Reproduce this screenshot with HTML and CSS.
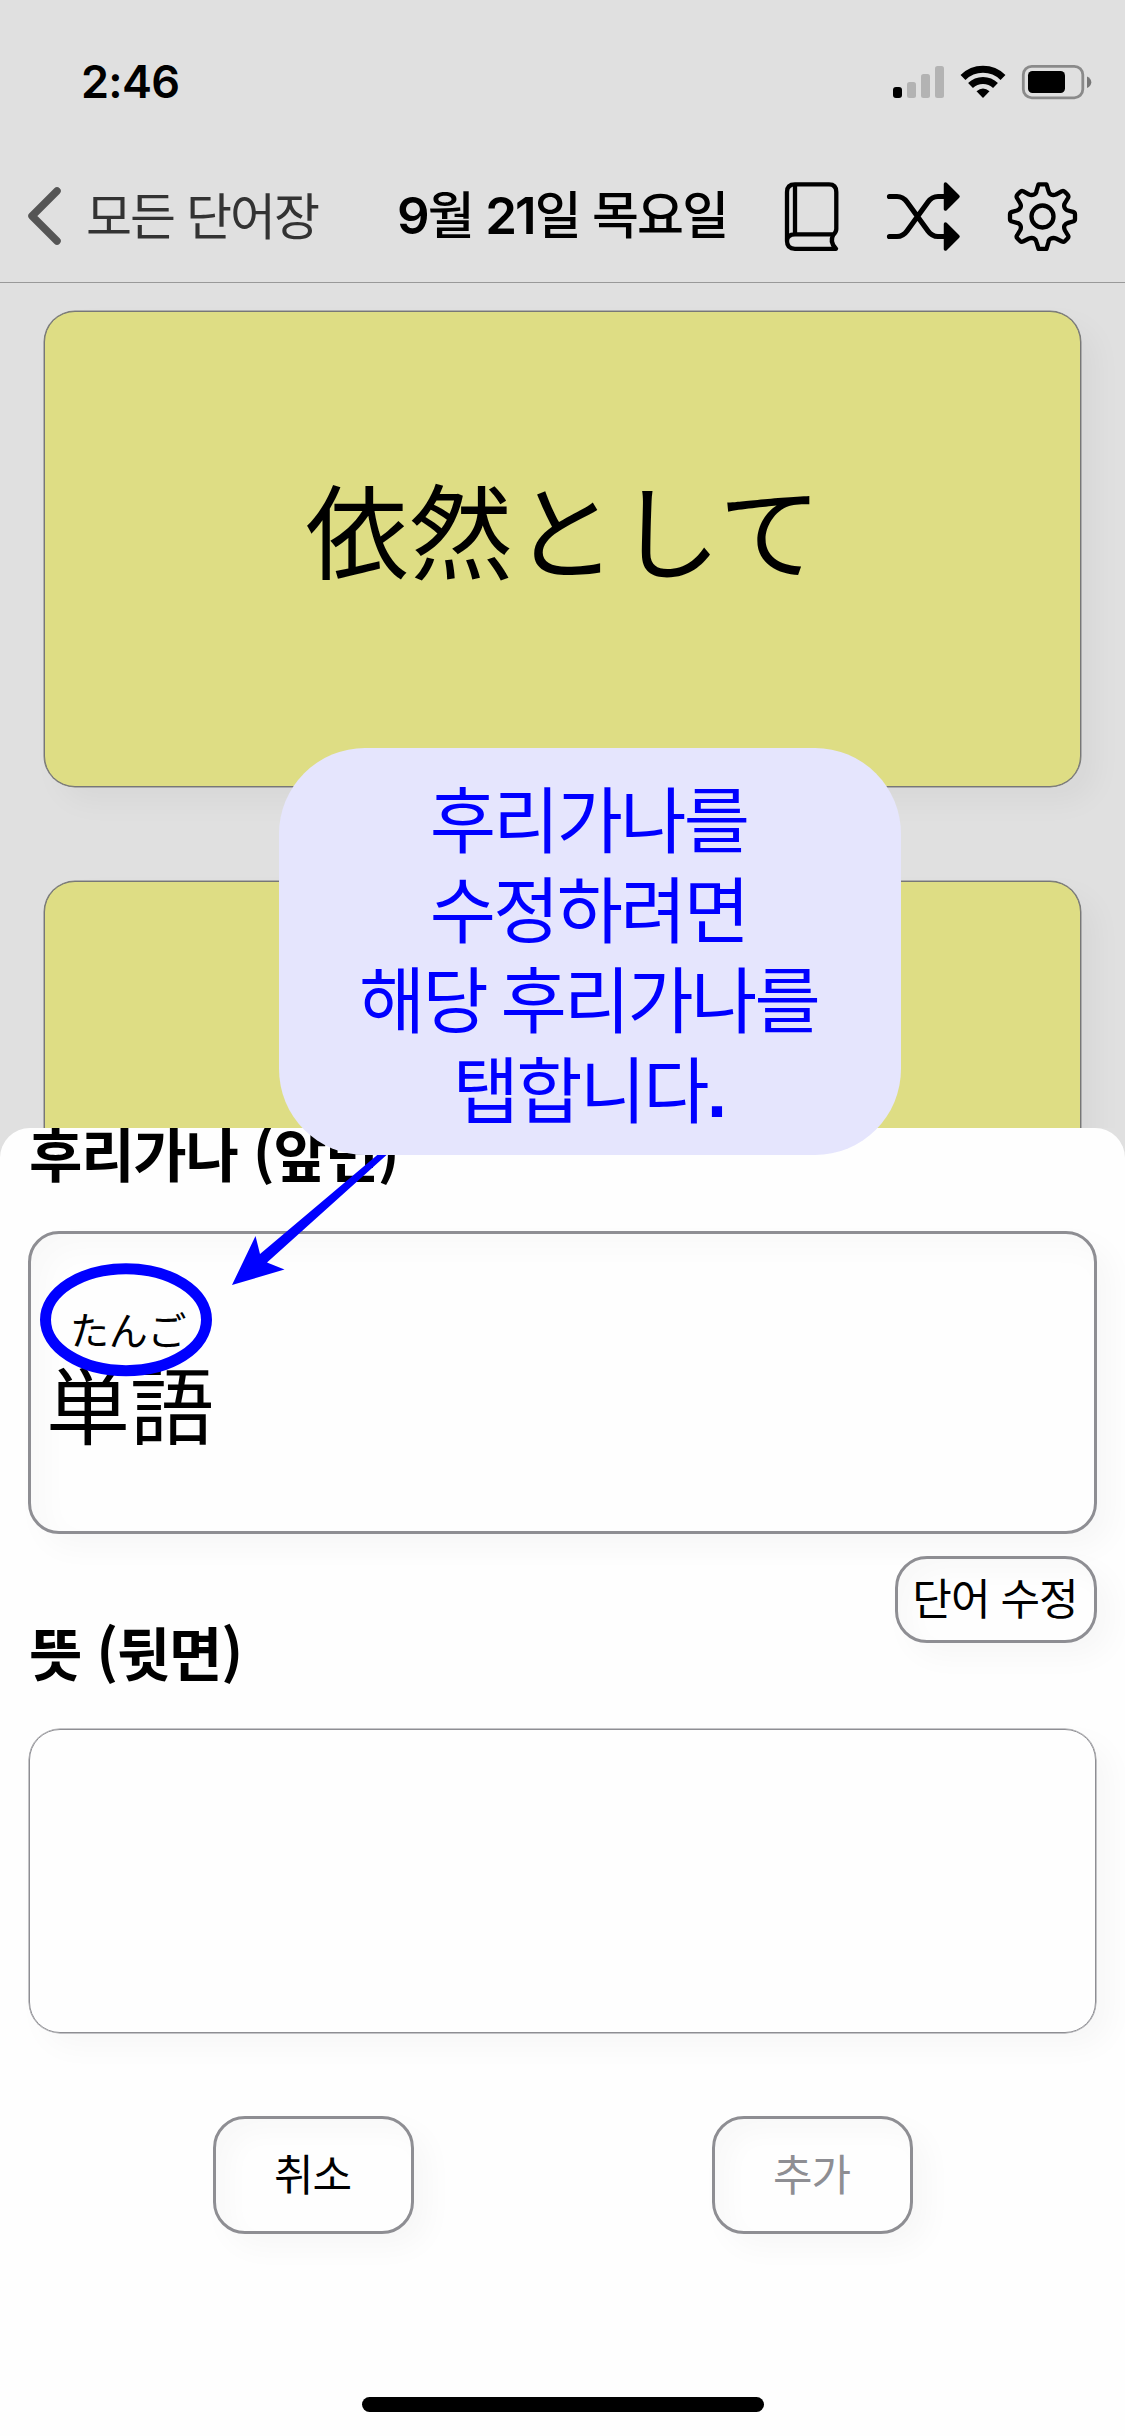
FILE: index.html
```html
<!DOCTYPE html>
<html lang="ko">
<head>
<meta charset="utf-8">
<title>단어장</title>
<link rel="stylesheet" href="styles.css">
</head>
<body>
<div class="screen">
  <div class="status">
    <span class="time">2:46</span>
    <svg class="status-icons" width="200" height="36" viewBox="892 64 200 36">
      <rect x="893" y="87" width="9" height="11" rx="3"/>
      <g fill="#b3b3b3"><rect x="907" y="82" width="9" height="16" rx="2.5"/><rect x="921" y="74" width="9" height="24" rx="2.5"/><rect x="935" y="66" width="9" height="32" rx="2.5"/></g>
      <g fill="none" stroke="#000" stroke-width="7"><path d="M963 77.500A28.500 28.500 0 0 1 1003 77.500"/><path d="M970.500 85.500A18 18 0 0 1 995.500 85.500"/></g>
      <path d="M983 98L976.500 91.200Q983 86 989.500 91.200Z"/>
      <rect x="1023.300" y="66.300" width="59.500" height="31.500" rx="8.500" fill="none" stroke="#8a8a8a" stroke-width="2.800"/>
      <rect x="1028" y="71" width="37" height="22" rx="4.500"/>
      <path d="M1087 76.500Q1091.300 78.500 1091.300 82.300T1087 88Z" fill="#777"/>
    </svg>
  </div>
  <div class="nav">
    <div class="back">
      <svg width="36" height="60" viewBox="0 0 36 60"><path d="M31 5L6 30L31 55" fill="none" stroke="#555" stroke-width="7.500" stroke-linecap="round" stroke-linejoin="round"/></svg>
      <span class="back-text">모든 단어장</span>
    </div>
    <div class="title"><b>9</b>월 <b>21</b>일 목요일</div>
    <svg class="nav-icons" width="300" height="72" viewBox="780 180 300 72" fill="none" stroke="#000" stroke-width="4.300" stroke-linecap="round" stroke-linejoin="round">
      <path d="M836 248.800H795Q787 248.800 787 241V192Q787 184.300 795 184.300H829Q836.300 184.300 836.300 192V229Q836.300 232 833.500 234.500Q829 242 836 248.800M787 241Q787 234.300 795 234.300H834M795 184.300V234"/>
      <g stroke-width="5.200"><path d="M889.500 196.500H897Q903 196.500 907 202L928 231Q932 236.500 938 236.500H944M889.500 236.500H897Q903 236.500 907 231L928 202Q932 196.500 938 196.500H944"/></g>
      <path d="M945.500 184L958 196.500L945.500 209ZM945.500 224L958 236.500L945.500 249Z" fill="#000" stroke-width="3.500"/>
      <circle cx="1042.500" cy="216.500" r="11"/>
      <path d="M1038.500 184.300H1046.500L1048.500 191Q1049 193.500 1051 194.500T1056 194.500L1062 191.200Q1063.500 190.500 1065 192L1067.500 194.500Q1069 196 1068 198L1065 203Q1063.500 205 1064.500 207.500T1068 210.500L1073 211.800Q1075 212.500 1075 214.500V219Q1075 221 1073 221.500L1068 222.800Q1065.500 223.500 1064.500 225.500T1065 230.500L1068 235.500Q1069 237 1067.500 238.500L1065 241Q1063.500 242.500 1062 241.500L1056 238.500Q1053.500 237.500 1051 238.500T1048.500 242L1046.500 248.800H1038.500L1036.500 242Q1036 239.500 1034 238.500T1029 238.500L1023 241.500Q1021.500 242.500 1020 241L1017.500 238.500Q1016 237 1017 235.500L1020 230.500Q1021.500 228 1020.500 225.500T1017 222.800L1012 221.500Q1010 221 1010 219V214.500Q1010 212.500 1012 211.800L1017 210.500Q1019.500 209.500 1020.500 207.500T1020 203L1017 198Q1016 196 1017.500 194.500L1020 192Q1021.500 190.500 1023 191.200L1029 194.500Q1031.500 195.500 1034 194.500T1036.500 191Z"/>
    </svg>
  </div>
  <div class="deck">
    <div class="card" lang="ja">依然として</div>
    <div class="card"></div>
  </div>
  <div class="sheet">
    <h2 class="label first">후리가나 (앞면)</h2>
    <div class="field front" lang="ja"><span class="kana">たんご</span><span class="kanji">単語</span></div>
    <div class="row"><h2 class="label">뜻 (뒷면)</h2><button class="edit">단어 수정</button></div>
    <div class="field back-side"></div>
    <div class="actions"><button>취소</button><button class="off">추가</button></div>
    <div class="home"></div>
  </div>
  <svg class="marks" width="420" height="240" viewBox="0 1140 420 240">
    <ellipse cx="126" cy="1319.700" rx="80.500" ry="51" fill="none" stroke="#00f" stroke-width="11"/>
    <path d="M232 1285L255.500 1236L260 1254L382 1151H391L267 1262.500L284.500 1269.500Z" fill="#00f"/>
  </svg>
  <div class="bubble">후리가나를<br>수정하려면<br>해당 후리가나를<br>탭합니다<b>.</b></div>
</div>
</body>
</html>
```
FILE: styles.css
```css
* { box-sizing: border-box; }
body { margin: 0; background: #e0e0e0; color: #000; font-family: "Noto Sans CJK KR", sans-serif; }
.screen { position: relative; width: 1125px; height: 2436px; overflow: hidden; display: flex; flex-direction: column; background: #e0e0e0; }
.status { height: 150px; padding: 64px 33px 0 81px; display: flex; justify-content: space-between; }
.time { font: 600 45px/36px Inter, sans-serif; letter-spacing: -0.700px; }
.status-icons, .nav-icons { display: block; flex: none; }
.nav { height: 133px; flex: none; border-bottom: 1px solid #999; display: flex; align-items: center; padding: 0 45px 0 26px; white-space: nowrap; }
.back { width: 371px; display: flex; align-items: center; gap: 24px; }
.back-text { font-size: 50px; line-height: 60px; letter-spacing: -2px; color: #333; padding-bottom: 7px; }
.title { width: 383px; font-size: 51px; line-height: 60px; font-weight: 500; letter-spacing: -1.900px; padding-bottom: 4px; }
.title b { font-family: Inter, sans-serif; font-weight: 600; }
.deck { padding: 28px 44px 0; display: flex; flex-direction: column; gap: 94px; height: 845px; flex: none; overflow: hidden; }
.card { height: 476px; flex: none; border: 1px solid #777; border-radius: 31px; background: #dedd84; box-shadow: 0 0 0 .5px #808080, 15px 15px 30px rgba(0,0,0,.04); display: flex; align-items: center; justify-content: center; font: 103px/120px "Noto Sans CJK JP", sans-serif; letter-spacing: 1px; padding: 0 0 43px 3px; }
.sheet { flex: 1; border-radius: 30px 30px 0 0; background: #fefefe; padding: 0 28px; overflow: hidden; display: flex; flex-direction: column; }
.label { margin: 0; padding-left: 1px; font-size: 58px; line-height: 70px; font-weight: 700; letter-spacing: -1.200px; white-space: nowrap; }
.first { margin-top: -11px; height: 114px; flex: none; }
.field { flex: none; border-radius: 31px; }
.front { height: 303px; border: 3px solid #8e8e93; box-shadow: 14px 14px 30px rgba(0,0,30,.03), inset 14px 14px 30px rgba(0,0,30,.025); font-family: "Noto Sans CJK JP", sans-serif; padding: 70px 0 0 15px; display: flex; flex-direction: column; }
.kana { font-size: 39px; line-height: 49px; padding-left: 24px; letter-spacing: -0.200px; }
.kanji { font-size: 84px; line-height: 98px; }
.row { height: 195px; flex: none; display: flex; justify-content: space-between; padding-top: 22px; }
.row .label { padding-top: 60px; }
button { margin: 0; padding: 0 2px 7px 0; border: 3px solid #8e8e93; border-radius: 32px; width: 201px; height: 118px; background: #fefefe; color: #000; font: 43px/50px "Noto Sans CJK KR", sans-serif; letter-spacing: -1px; box-shadow: 14px 14px 30px rgba(0,0,30,.03), inset 14px 14px 24px rgba(0,0,30,.025); }
.edit { width: 202px; height: 87px; }
.back-side { height: 304px; border: 1px solid #8e8e93; box-shadow: 0 0 0 .5px #8e8e93, 14px 14px 30px rgba(0,0,30,.03); margin: 0 1px; }
.actions { padding: 83px 184px 0 185px; display: flex; justify-content: space-between; }
.off { color: #8e8e93; }
.home { width: 402px; height: 15px; border-radius: 8px; background: #000; margin: auto auto 24px; }
.marks { position: absolute; left: 0; top: 1140px; }
.bubble { position: absolute; left: 279px; top: 748px; width: 622px; height: 407px; border-radius: 86px; background: #e5e5fd; color: #00f; text-align: center; font-size: 72px; line-height: 90px; letter-spacing: -2.700px; word-spacing: -3px; padding: 23px 3px 0 0; }
.bubble b { font-family: "Liberation Sans", sans-serif; }
```
